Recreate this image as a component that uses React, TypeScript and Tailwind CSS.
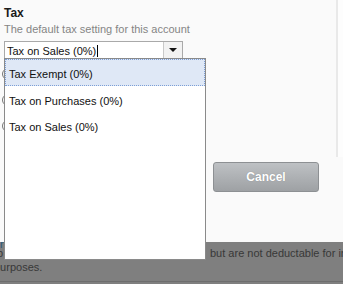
import React from "react";

export default function App() {
  const items = [
    { label: "Tax Exempt (0%)", active: true, h: "h-[27px]" },
    { label: "Tax on Purchases (0%)", active: false, h: "h-[26px]" },
    { label: "Tax on Sales (0%)", active: false, h: "h-[27px]" },
  ];
  return (
    <div
      className="relative w-[343px] h-[284px] overflow-hidden flex flex-col text-[11px]"
      style={{ fontFamily: '"Liberation Sans", Arial, sans-serif' }}
    >
      {/* Panel */}
      <div className="h-[242px] flex bg-[#fafafa]">
        <div className="w-[336px] flex flex-col px-[4px]">
          <div className="pt-[6px] text-[12px] leading-[14px] font-bold text-[#1a1a1a]">Tax</div>
          <div className="mt-[2px] leading-[14px] text-[#858585]">The default tax setting for this account</div>
          <div className="mt-[5px] w-[179px] h-[18px] flex border border-[#a9a9a9] bg-white">
            <div className="flex-1 flex items-start pl-[2px] pt-[2px] leading-[14px] text-[#111]">
              <span>Tax on Sales (0%)</span>
              <span className="ml-[1px] mt-[1px] w-[1px] h-[12px] bg-black" />
            </div>
            <div className="w-[19px] h-full border-l border-[#c9c9c9] bg-[#f2f2f2] flex items-center justify-center">
              <svg width="8" height="4" viewBox="0 0 8 4">
                <path d="M0 0 H8 L4 4 Z" fill="#111" />
              </svg>
            </div>
          </div>
          <div className="mt-[9px] flex flex-col gap-[14px] ml-[-2px]">
            <div className="w-[12px] h-[12px] rounded-full border border-[#777]" />
            <div className="w-[12px] h-[12px] rounded-full border border-[#777]" />
            <div className="w-[12px] h-[12px] rounded-full border border-[#777]" />
          </div>
          <button className="mt-[30px] ml-[209px] w-[106px] h-[30px] rounded-[3px] border border-[#8d9093] bg-gradient-to-b from-[#bec1c4] to-[#9ea1a4] text-white text-[12px] font-bold [text-shadow:0_0_1px_rgba(0,0,0,0.25)]">
            Cancel
          </button>
        </div>
        <div className="w-[7px] flex">
          <div className="w-[2px] h-[157px] bg-[#e9e9e9]" />
          <div className="flex-1 h-[157px] bg-[#fdfdfd]" />
        </div>
      </div>

      {/* Dimmed page text below */}
      <div className="flex-1 flex flex-col bg-[#7f7f7f] text-[#383838] overflow-hidden whitespace-nowrap">
        <div className="h-[4px] leading-[4px] text-[#2c5b7c]">r</div>
        <div className="flex leading-[14px]">
          <span className="w-[210px] shrink-0 overflow-hidden">
            <span className="ml-[-3px]">p</span>
          </span>
          <span className="shrink-0">but are not deductable for income tax</span>
        </div>
        <div className="leading-[14px] ml-[-6px]">purposes.</div>
        <div className="mt-auto h-[3px] border-t border-[#6d6d6d]" />
      </div>

      {/* Open dropdown list */}
      <div className="absolute left-[4px] top-[58px] w-[202px] h-[202px] border border-[#8a8a8a] bg-white text-[#111]">
        {items.map((it) => (
          <div
            key={it.label}
            className={
              it.h +
              " leading-[14px] " +
              (it.active
                ? "bg-[#dfe8f6] border border-dotted border-[#7d9fd6] pl-[3px] pt-[7px]"
                : "pl-[4px] pt-[8px]")
            }
          >
            {it.label}
          </div>
        ))}
      </div>
    </div>
  );
}
